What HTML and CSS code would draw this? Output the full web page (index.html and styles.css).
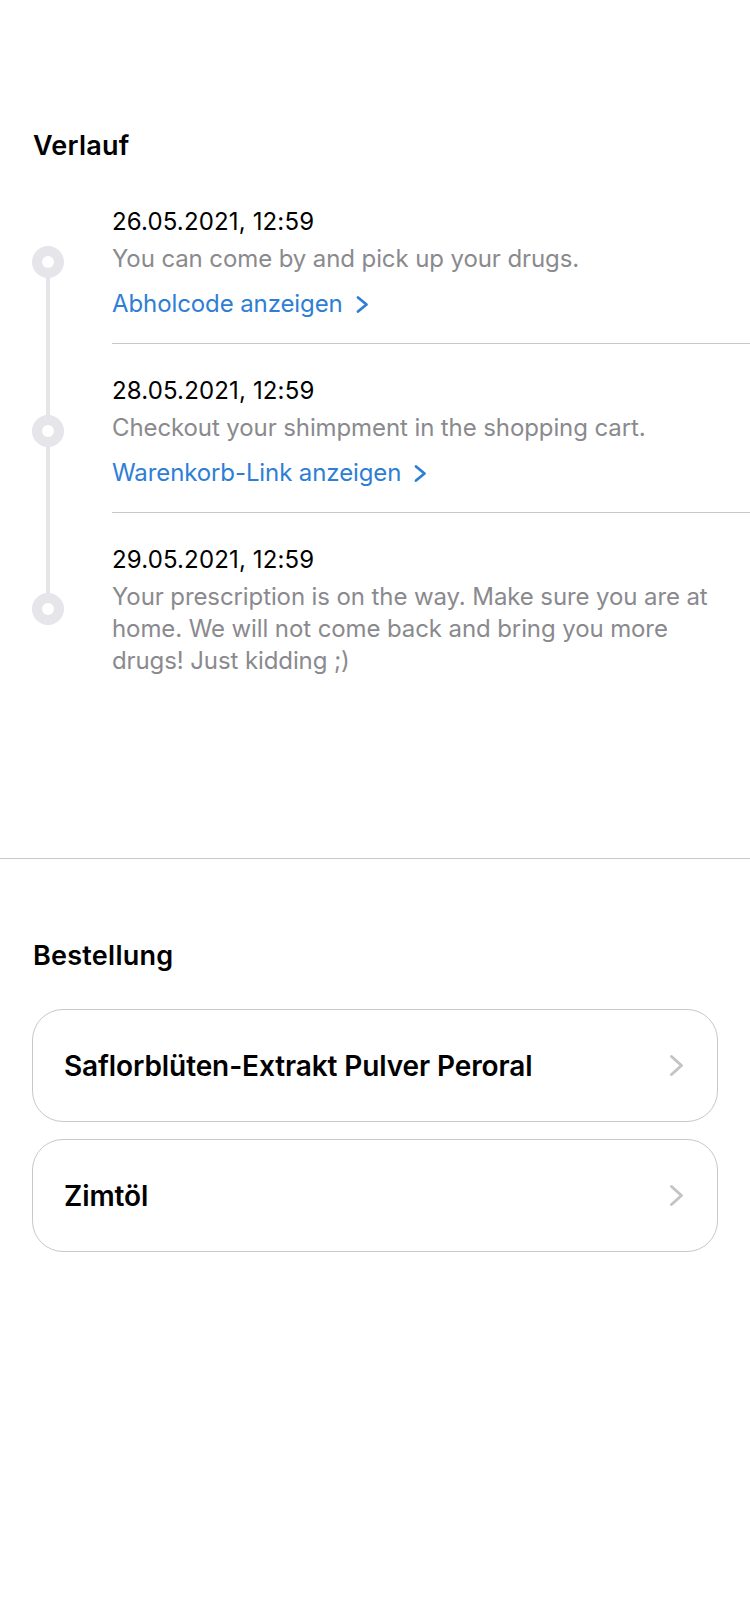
FILE: index.html
```html
<!DOCTYPE html>
<html lang="de">
<head>
<meta charset="utf-8">
<title>Verlauf</title>
<link rel="stylesheet" href="styles.css">
</head>
<body>
<main class="page">
  <section class="history">
    <h2 class="section-title">Verlauf</h2>
    <ol class="timeline">
      <li class="event event-first">
        <div class="rail"><span class="dot"></span></div>
        <div class="event-body">
          <div class="event-date">26.05.2021, 12:59</div>
          <p class="event-text">You can come by and pick up your drugs.</p>
          <a class="event-link" href="#">Abholcode anzeigen
            <svg class="link-chevron" viewBox="0 0 14 19" width="14" height="19" aria-hidden="true"><polyline points="3,2.5 11.5,9.5 3,16.5" fill="none" stroke="currentColor" stroke-width="2.8" stroke-linecap="round" stroke-linejoin="round"/></svg>
          </a>
        </div>
      </li>
      <li class="event">
        <div class="rail"><span class="dot"></span></div>
        <div class="event-body">
          <div class="event-date">28.05.2021, 12:59</div>
          <p class="event-text">Checkout your shimpment in the shopping cart.</p>
          <a class="event-link" href="#">Warenkorb-Link anzeigen
            <svg class="link-chevron" viewBox="0 0 14 19" width="14" height="19" aria-hidden="true"><polyline points="3,2.5 11.5,9.5 3,16.5" fill="none" stroke="currentColor" stroke-width="2.8" stroke-linecap="round" stroke-linejoin="round"/></svg>
          </a>
        </div>
      </li>
      <li class="event event-last">
        <div class="rail"><span class="dot"></span></div>
        <div class="event-body">
          <div class="event-date">29.05.2021, 12:59</div>
          <p class="event-text">Your prescription is on the way. Make sure you are at home. We will not come back and bring you more drugs! Just kidding ;)</p>
        </div>
      </li>
    </ol>
  </section>
  <hr class="divider">
  <section class="order">
    <h2 class="section-title">Bestellung</h2>
    <ul class="order-list">
      <li class="order-card">
        <span class="order-name">Saflorblüten-Extrakt Pulver Peroral</span>
        <svg class="card-chevron" viewBox="0 0 15 23" width="15" height="23" aria-hidden="true"><polyline points="2.5,2.5 12.5,11.5 2.5,20.5" fill="none" stroke="currentColor" stroke-width="3" stroke-linecap="round" stroke-linejoin="round"/></svg>
      </li>
      <li class="order-card">
        <span class="order-name">Zimtöl</span>
        <svg class="card-chevron" viewBox="0 0 15 23" width="15" height="23" aria-hidden="true"><polyline points="2.5,2.5 12.5,11.5 2.5,20.5" fill="none" stroke="currentColor" stroke-width="3" stroke-linecap="round" stroke-linejoin="round"/></svg>
      </li>
    </ul>
  </section>
</main>
</body>
</html>
```
FILE: styles.css
```css
* { box-sizing: border-box; }
html, body { margin: 0; padding: 0; background: #ffffff; }
body {
  font-family: Inter, "Noto Sans", "Liberation Sans", sans-serif;
  color: #000;
  width: 750px;
  height: 1624px;
  overflow: hidden;
}
.page { padding-top: 130px; }
.section-title {
  margin: 0;
  padding-left: 33px;
  font-size: 27px;
  line-height: 32px;
  font-weight: 600;
  letter-spacing: 0.25px;
}
.timeline {
  list-style: none;
  margin: 13px 0 0 0;
  padding: 0 0 0 32px;
}
.event {
  display: flex;
  align-items: stretch;
}
.rail {
  position: relative;
  width: 80px;
  flex: none;
  display: flex;
  align-items: center;
}
.rail::before {
  content: "";
  position: absolute;
  left: 14px;
  width: 4px;
  top: 0;
  bottom: 0;
  background: #e5e5ea;
}
.event-first .rail::before { top: 50%; }
.event-last .rail::before { bottom: 50%; }
.dot {
  position: relative;
  width: 32px;
  height: 32px;
  margin-top: 5px;
  border-radius: 50%;
  border: 10px solid #e5e5ea;
  background: #fff;
}
.event-body {
  flex: 1;
  padding: 31px 0 23px 0;
  border-bottom: 1px solid #c8c8cc;
}
.event-last .event-body { border-bottom: none; padding-bottom: 23px; }
.event-date {
  font-size: 24px;
  line-height: 32px;
  letter-spacing: 0.15px;
}
.event-text {
  margin: 5px 0 0 0;
  font-size: 24px;
  line-height: 32px;
  color: #8a8a8e;
  padding-right: 20px;
  letter-spacing: -0.1px;
}
.event-link {
  display: flex;
  align-items: center;
  gap: 12px;
  margin-top: 13px;
  font-size: 24px;
  line-height: 32px;
  color: #2e7ed6;
  text-decoration: none;
  letter-spacing: -0.1px;
}
.link-chevron { flex: none; margin-top: 1px; }
.divider {
  margin: 158px 0 0 0;
  border: none;
  border-top: 1px solid #c8c8cc;
  height: 0;
}
.order { padding-top: 81px; }
.order-list {
  list-style: none;
  margin: 37px 0 0 0;
  padding: 0 32px;
  display: flex;
  flex-direction: column;
  gap: 17px;
}
.order-card {
  height: 113px;
  border: 1px solid #c8c8cc;
  border-radius: 31px;
  display: flex;
  align-items: center;
  justify-content: space-between;
  padding: 0 33px 0 31px;
}
.order-name {
  font-size: 28px;
  font-weight: 600;
  letter-spacing: -0.1px;
}
.card-chevron { color: #c4c4c6; flex: none; }
```
